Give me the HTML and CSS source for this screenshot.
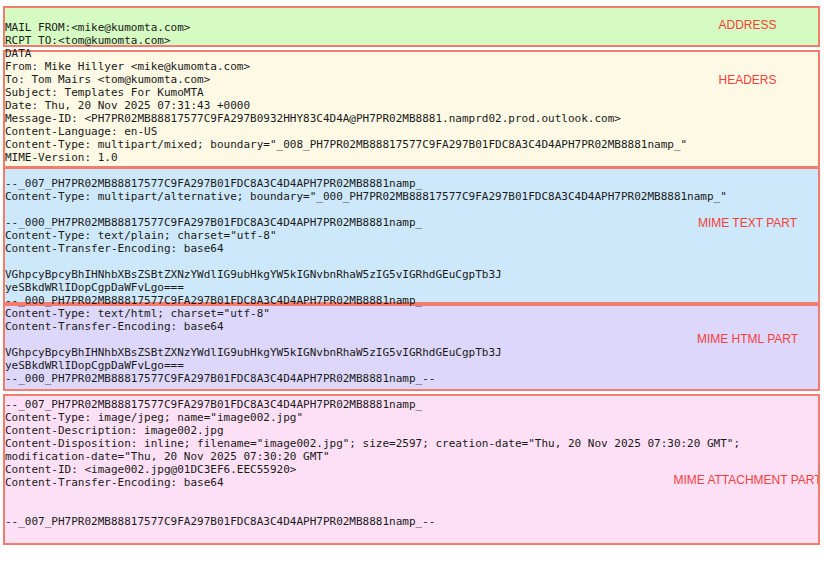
FILE: index.html
```html
<!DOCTYPE html>
<html lang="en">
<head>
<meta charset="utf-8">
<title>MIME message anatomy</title>
<link rel="stylesheet" href="styles.css">
</head>
<body>
<main class="message">
  <section class="part part-address">
    <pre class="raw">MAIL FROM:&lt;mike@kumomta.com&gt;
RCPT TO:&lt;tom@kumomta.com&gt;</pre>
    <div class="label"><span>ADDRESS</span></div>
  </section>
  <section class="part part-headers">
    <pre class="raw">DATA
From: Mike Hillyer &lt;mike@kumomta.com&gt;
To: Tom Mairs &lt;tom@kumomta.com&gt;
Subject: Templates For KumoMTA
Date: Thu, 20 Nov 2025 07:31:43 +0000
Message-ID: &lt;PH7PR02MB88817577C9FA297B0932HHY83C4D4A@PH7PR02MB8881.namprd02.prod.outlook.com&gt;
Content-Language: en-US
Content-Type: multipart/mixed; boundary="_008_PH7PR02MB88817577C9FA297B01FDC8A3C4D4APH7PR02MB8881namp_"
MIME-Version: 1.0</pre>
    <div class="label"><span>HEADERS</span></div>
  </section>
  <section class="part part-text">
    <pre class="raw">--_007_PH7PR02MB88817577C9FA297B01FDC8A3C4D4APH7PR02MB8881namp_
Content-Type: multipart/alternative; boundary="_000_PH7PR02MB88817577C9FA297B01FDC8A3C4D4APH7PR02MB8881namp_"

--_000_PH7PR02MB88817577C9FA297B01FDC8A3C4D4APH7PR02MB8881namp_
Content-Type: text/plain; charset="utf-8"
Content-Transfer-Encoding: base64

VGhpcyBpcyBhIHNhbXBsZSBtZXNzYWdlIG9ubHkgYW5kIGNvbnRhaW5zIG5vIGRhdGEuCgpTb3J
yeSBkdWRlIDopCgpDaWFvLgo===
--_000_PH7PR02MB88817577C9FA297B01FDC8A3C4D4APH7PR02MB8881namp_</pre>
    <div class="label"><span>MIME TEXT PART</span></div>
  </section>
  <section class="part part-html">
    <pre class="raw">Content-Type: text/html; charset="utf-8"
Content-Transfer-Encoding: base64

VGhpcyBpcyBhIHNhbXBsZSBtZXNzYWdlIG9ubHkgYW5kIGNvbnRhaW5zIG5vIGRhdGEuCgpTb3J
yeSBkdWRlIDopCgpDaWFvLgo===
--_000_PH7PR02MB88817577C9FA297B01FDC8A3C4D4APH7PR02MB8881namp_--</pre>
    <div class="label"><span>MIME HTML PART</span></div>
  </section>
  <section class="part part-attach">
    <pre class="raw">--_007_PH7PR02MB88817577C9FA297B01FDC8A3C4D4APH7PR02MB8881namp_
Content-Type: image/jpeg; name="image002.jpg"
Content-Description: image002.jpg
Content-Disposition: inline; filename="image002.jpg"; size=2597; creation-date="Thu, 20 Nov 2025 07:30:20 GMT";
modification-date="Thu, 20 Nov 2025 07:30:20 GMT"
Content-ID: &lt;image002.jpg@01DC3EF6.EEC55920&gt;
Content-Transfer-Encoding: base64


--_007_PH7PR02MB88817577C9FA297B01FDC8A3C4D4APH7PR02MB8881namp_--</pre>
    <div class="label"><span>MIME ATTACHMENT PART</span></div>
  </section>
</main>
</body>
</html>
```

FILE: styles.css
```css
html, body {
  margin: 0;
  padding: 0;
  background: #ffffff;
  overflow: hidden;
}

.message {
  display: block;
  width: 817px;
  margin-left: 3px;
  padding-top: 6px;
}

.part {
  display: flex;
  align-items: flex-start;
  box-sizing: border-box;
  border: 2px solid #f27d6f;
}

.raw {
  flex: 1 1 auto;
  min-width: 0;
  margin: 0;
  font-family: "DejaVu Sans Mono", monospace;
  font-size: 11px;
  line-height: 13px;
  color: #1a1a1a;
  white-space: pre;
}

.label {
  flex: 0 0 141px;
  width: 141px;
  display: flex;
  justify-content: center;
  white-space: nowrap;
  font-family: "Liberation Sans", Arial, sans-serif;
  font-size: 12px;
  line-height: 14px;
  color: #f2403c;
}

/* ADDRESS */
.part-address {
  height: 41px;
  background: #d5fbc2;
}
.part-address .raw { margin-top: 13px; }
.part-address .label { padding-top: 10px; }

/* HEADERS */
.part-headers {
  height: 118px;
  margin-top: 3px;
  background: #fdf9e5;
}
.part-headers .raw { margin-top: -5px; }
.part-headers .label { padding-top: 21px; }

/* MIME TEXT PART */
.part-text {
  height: 137px;
  margin-top: -1px;
  background: #cde8fa;
}
.part-text .raw { margin-top: 8px; }
.part-text .label { padding-top: 47px; }

/* MIME HTML PART */
.part-html {
  height: 87px;
  background: #ddd8fb;
}
.part-html .raw { margin-top: 1px; }
.part-html .label { padding-top: 26px; }

/* MIME ATTACHMENT PART */
.part-attach {
  height: 151px;
  margin-top: 3px;
  background: #fde0f5;
  overflow: hidden;
}
.part-attach .raw { margin-top: 2px; }
.part-attach .label { padding-top: 77px; }
```
